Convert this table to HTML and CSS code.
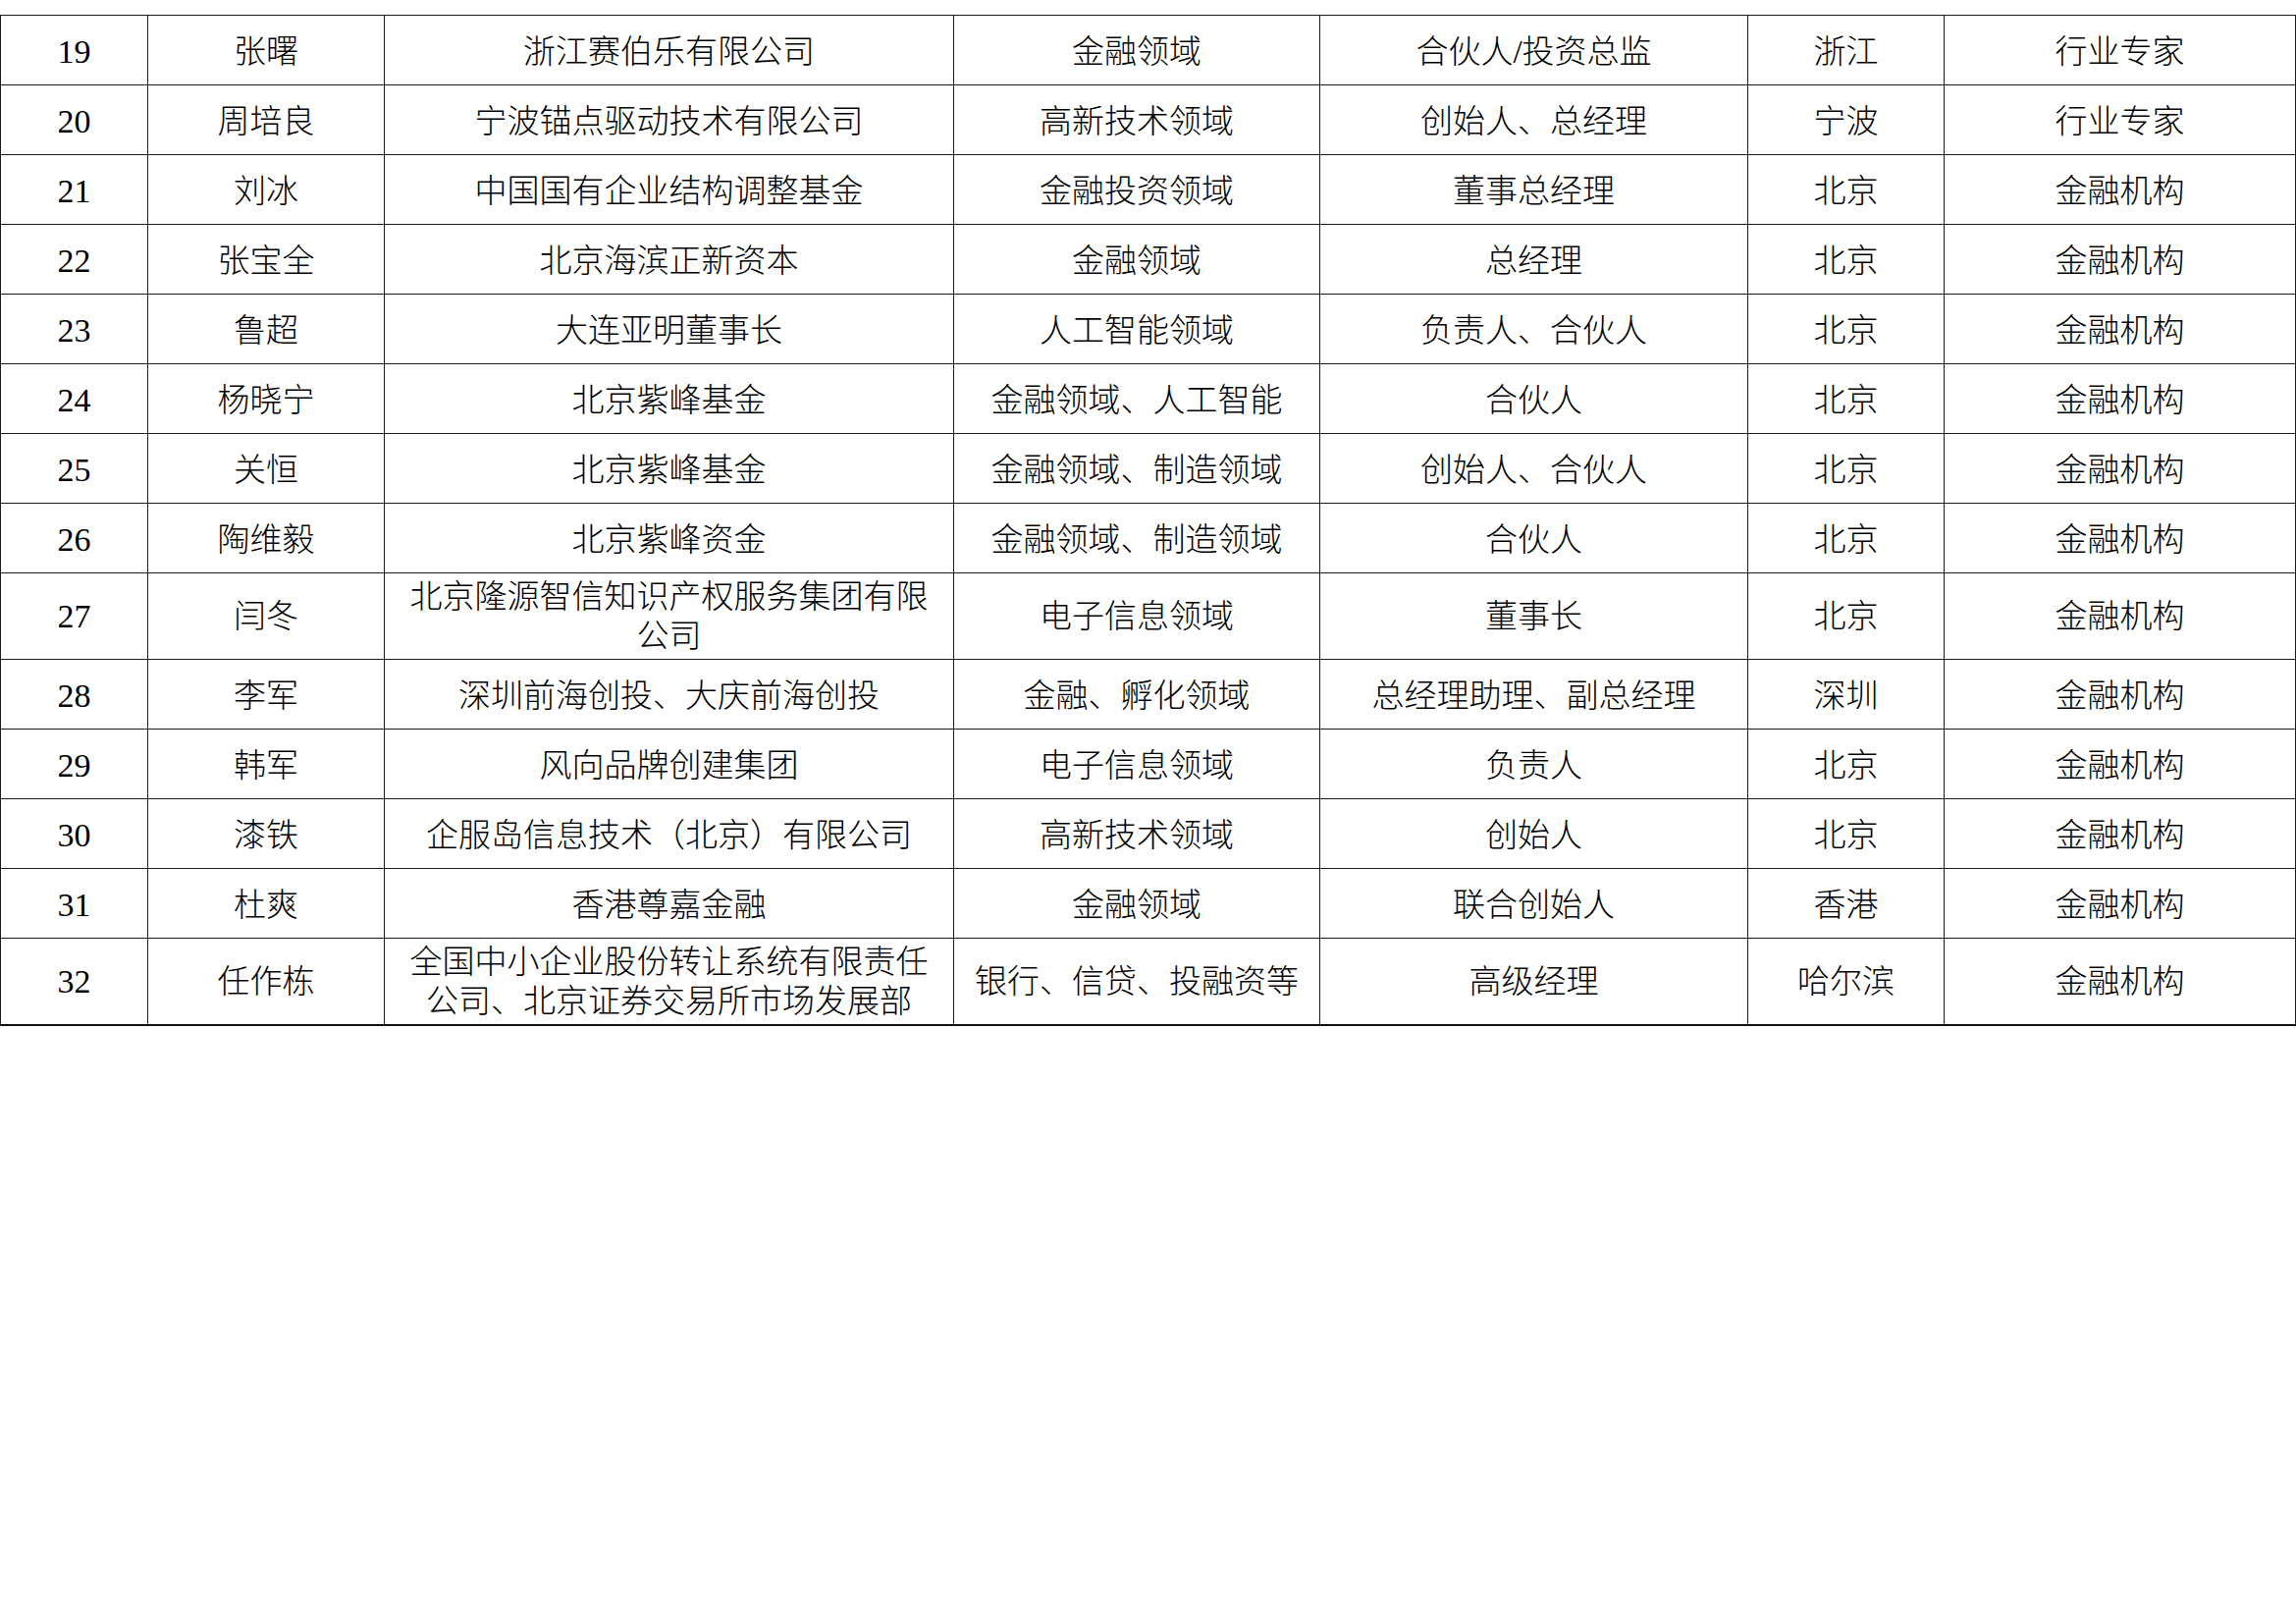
FILE: index.html
```html
<!DOCTYPE html>
<html lang="zh-CN">
<head>
<meta charset="utf-8">
<title>名单</title>
<link rel="stylesheet" href="styles.css">
</head>
<body>
<table class="roster">
  <colgroup>
    <col class="c-no"><col class="c-name"><col class="c-org"><col class="c-field"><col class="c-title"><col class="c-city"><col class="c-type">
  </colgroup>
  <tbody>
    <tr><td class="num">19</td><td>张曙</td><td>浙江赛伯乐有限公司</td><td>金融领域</td><td>合伙人/投资总监</td><td>浙江</td><td>行业专家</td></tr>
    <tr><td class="num">20</td><td>周培良</td><td>宁波锚点驱动技术有限公司</td><td>高新技术领域</td><td>创始人、总经理</td><td>宁波</td><td>行业专家</td></tr>
    <tr><td class="num">21</td><td>刘冰</td><td>中国国有企业结构调整基金</td><td>金融投资领域</td><td>董事总经理</td><td>北京</td><td>金融机构</td></tr>
    <tr><td class="num">22</td><td>张宝全</td><td>北京海滨正新资本</td><td>金融领域</td><td>总经理</td><td>北京</td><td>金融机构</td></tr>
    <tr><td class="num">23</td><td>鲁超</td><td>大连亚明董事长</td><td>人工智能领域</td><td>负责人、合伙人</td><td>北京</td><td>金融机构</td></tr>
    <tr><td class="num">24</td><td>杨晓宁</td><td>北京紫峰基金</td><td>金融领域、人工智能</td><td>合伙人</td><td>北京</td><td>金融机构</td></tr>
    <tr><td class="num">25</td><td>关恒</td><td>北京紫峰基金</td><td>金融领域、制造领域</td><td>创始人、合伙人</td><td>北京</td><td>金融机构</td></tr>
    <tr><td class="num">26</td><td>陶维毅</td><td>北京紫峰资金</td><td>金融领域、制造领域</td><td>合伙人</td><td>北京</td><td>金融机构</td></tr>
    <tr class="tall"><td class="num">27</td><td>闫冬</td><td>北京隆源智信知识产权服务集团有限公司</td><td>电子信息领域</td><td>董事长</td><td>北京</td><td>金融机构</td></tr>
    <tr><td class="num">28</td><td>李军</td><td>深圳前海创投、大庆前海创投</td><td>金融、孵化领域</td><td>总经理助理、副总经理</td><td>深圳</td><td>金融机构</td></tr>
    <tr><td class="num">29</td><td>韩军</td><td>风向品牌创建集团</td><td>电子信息领域</td><td>负责人</td><td>北京</td><td>金融机构</td></tr>
    <tr><td class="num">30</td><td>漆铁</td><td>企服岛信息技术（北京）有限公司</td><td>高新技术领域</td><td>创始人</td><td>北京</td><td>金融机构</td></tr>
    <tr><td class="num">31</td><td>杜爽</td><td>香港尊嘉金融</td><td>金融领域</td><td>联合创始人</td><td>香港</td><td>金融机构</td></tr>
    <tr class="tall last"><td class="num">32</td><td>任作栋</td><td>全国中小企业股份转让系统有限责任公司、北京证券交易所市场发展部</td><td>银行、信贷、投融资等</td><td>高级经理</td><td>哈尔滨</td><td>金融机构</td></tr>
  </tbody>
</table>
</body>
</html>
```
FILE: styles.css
```css
html, body {
  margin: 0;
  padding: 0;
  background: #ffffff;
}

body {
  font-family: "Liberation Serif", "Noto Sans CJK SC", serif;
  color: #000000;
}

.roster {
  margin-top: 15px;
  width: 2338px;
  table-layout: fixed;
  border-collapse: collapse;
}

.c-no { width: 150px; }
.c-name { width: 241px; }
.c-org { width: 580px; }
.c-field { width: 373px; }
.c-title { width: 436px; }
.c-city { width: 200px; }
.c-type { width: 358px; }

.roster tr {
  height: 71px;
}

.roster tr.tall {
  height: 88px;
}

.roster td {
  border: 1px solid #1a1a1a;
  padding: 4px 12px 0;
  text-align: center;
  vertical-align: middle;
  font-size: 33px;
  line-height: 40px;
  font-weight: 300;
}

.roster tr.tall td {
  padding-top: 1px;
}

.roster tr.last td {
  border-bottom: 2px solid #111111;
}

.roster td.num {
  font-size: 34px;
  font-weight: 400;
}
```
